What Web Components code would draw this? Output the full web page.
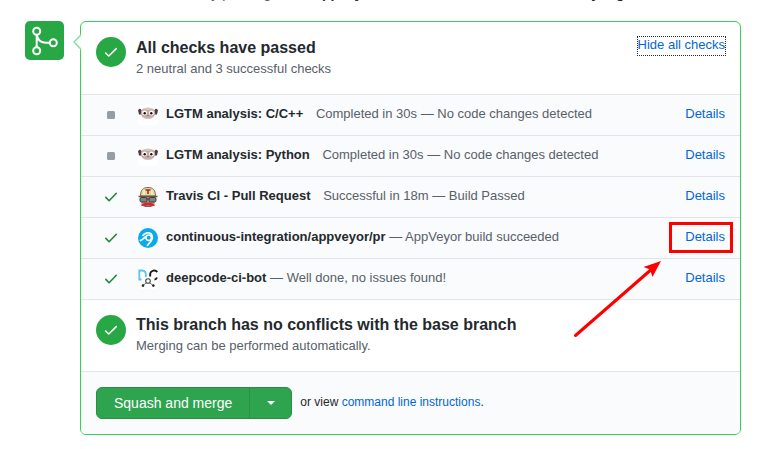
<!DOCTYPE html>
<html lang="en">
<head>
<meta charset="utf-8">
<title>Merge checks</title>
<style>
html{overflow:hidden}
body{margin:0;background:#fff;font-family:"Liberation Sans",Arial,sans-serif;font-size:13px;line-height:20px;color:#24292e}
</style>
</head>
<body>
<merge-page></merge-page>

<template id="page">
<style>
:host{display:block;padding:0 17px 14px 25px}
.hint{margin:-17px 0 17px 58px;font-size:14px;line-height:21px;color:#586069;white-space:nowrap}
.hint strong{color:#24292e}
main{display:grid;grid-template-columns:39px 1fr;column-gap:16px;align-items:start}
</style>
<p class="hint">Add more commits by pushing to the <strong>appveyor-artifacts</strong> branch on <strong>radar/memory-log</strong>.</p>
<main>
<merge-badge></merge-badge>
<merge-panel>
<status-header heading="All checks have passed" note="2 neutral and 3 successful checks"><toggle-link>Hide all checks</toggle-link></status-header>
<check-row state="neutral" logo="lgtm" name="LGTM analysis: C/C++" spaced>Completed in 30s — No code changes detected</check-row>
<check-row state="neutral" logo="lgtm" name="LGTM analysis: Python" spaced>Completed in 30s — No code changes detected</check-row>
<check-row state="success" logo="travis" name="Travis CI - Pull Request" spaced>Successful in 18m — Build Passed</check-row>
<check-row state="success" logo="appveyor" name="continuous-integration/appveyor/pr" marked>— AppVeyor build succeeded</check-row>
<check-row state="success" logo="deepcode" name="deepcode-ci-bot">— Well done, no issues found!</check-row>
<status-header class="rule" heading="This branch has no conflicts with the base branch" note="Merging can be performed automatically."></status-header>
<merge-actions></merge-actions>
</merge-panel>
</main>
</template>

<template id="badge">
<style>
:host{display:grid;place-items:center;height:39px;border-radius:5px;background:#28a745}
svg{display:block}
</style>
<svg width="39" height="39" viewBox="0 0 39 39" fill="none" stroke="#fff" stroke-width="2"><circle cx="11.7" cy="10.3" r="3.5"/><circle cx="11.7" cy="29.7" r="3.5"/><circle cx="28.3" cy="21.7" r="3.5"/><path d="M11.7 14v12M12 15c1.2 4.500 5 6.700 9 6.700h4"/></svg>
</template>

<template id="panel">
<style>
:host{display:block;position:relative;border:1px solid #34d058;border-radius:6px;min-width:0;background:#fff}
.tail{position:absolute;left:-8px;top:12px;display:block}
</style>
<svg class="tail" width="8" height="16" viewBox="0 0 8 16"><path d="M8 0L1 8l7 8z" fill="#fafbfc"/><path d="M8 .7L1 8l7 7.300" fill="none" stroke="#86dc98" stroke-width="1.300"/></svg>
<slot></slot>
</template>

<template id="header">
<style>
:host{display:flex;align-items:flex-start;padding:14px 14px 15px 15px}
:host(.rule){border-top:1px solid #e1e4e8;padding-top:13px}
.round{flex:none;width:30px;height:30px;margin:1px 10px 0 0;border-radius:50%;background:#28a745;display:grid;place-items:center}
:host(.rule) .round{margin-top:2px}
.text{flex:1;min-width:0}
h3{margin:0;font-size:16px;line-height:23px}
p{margin:0;color:#586069;line-height:20px}
</style>
<span class="round"><svg width="16" height="16" viewBox="0 0 16 16" fill="none" stroke="#fff" stroke-width="1.500" stroke-linecap="round" stroke-linejoin="round"><path d="M2.600 9l3.200 3L13.300 4.600"/></svg></span>
<div class="text"><h3></h3><p></p></div>
<slot></slot>
</template>

<template id="toggle">
<style>
:host{display:block}
button{display:block;margin:0;padding:0 0 2px 0;border:1px dotted #24292e;background:none;color:#0366d6;font:inherit;line-height:16px;cursor:pointer}
</style>
<button type="button" aria-expanded="true"><slot></slot></button>
</template>

<template id="row">
<style>
:host{display:grid;grid-template-columns:30px 40px 1fr auto;align-items:center;height:40px;padding:0 15px;background:#fafbfc;border-top:1px solid #e1e4e8}
.state{display:grid;place-items:center}
.logo{margin-left:12px;width:20px;height:20px}
svg{display:block}
p{margin:0;padding-bottom:3px;color:#586069;white-space:nowrap}
strong{color:#24292e}
:host([spaced]) strong{margin-right:9px}
a{position:relative;color:#0366d6;text-decoration:none;padding-bottom:3px}
.mark{position:absolute;left:-17px;top:-6px;pointer-events:none}
.arrow{position:absolute;right:62px;top:33px;pointer-events:none;z-index:2}
</style>
<span class="state"></span><span class="logo"></span>
<p><strong></strong> <slot></slot></p>
<a href="#details">Details</a>
</template>

<template id="actions">
<style>
:host{display:flex;align-items:center;padding:15px;background:#fafbfc;border-top:1px solid #e1e4e8;border-radius:0 0 5px 5px}
.group{display:flex;height:32px;box-sizing:border-box;border:1px solid #2a8f45;border-radius:6px;background:#2ea44f;overflow:hidden}
button{border:0;margin:0;padding:0 17px;background:none;color:#fff;font:inherit;font-size:14px;line-height:29px;cursor:pointer}
.more{border-left:1px solid #2a8f45;width:42px;padding:0;display:grid;place-items:center}
p{margin:0 0 2px 8px;font-size:12px}
a{color:#0366d6;text-decoration:none}
</style>
<div class="group"><button type="button">Squash and merge</button><button class="more" type="button" aria-label="Select merge method"><svg width="8" height="4" viewBox="0 0 8 4"><path d="M0 0h8L4 4z" fill="#fff"/></svg></button></div>
<p>or view <a href="#cli">command line instructions</a>.</p>
</template>

<script>
const ICONS = {
  neutral: '<svg width="8" height="8"><rect width="8" height="8" rx="1.5" fill="#959da5"/></svg>',
  success: '<svg width="16" height="16" viewBox="0 0 16 16" fill="none" stroke="#22863a" stroke-width="1.6" stroke-linecap="round" stroke-linejoin="round"><path d="M2.800 8.400l3.300 3.300L13.300 4.300"/></svg>',
  lgtm: '<svg width="20" height="20" viewBox="0 0 20 20"><rect width="20" height="20" rx="3" fill="#fff"/><path d="M0 5l2-1.500 2 2-1 4-2 0z" fill="#4b3b40"/><path d="M20 5l-2-1.500-2 2 1 4 2 0z" fill="#4b3b40"/><path d="M3 7C3 4 6 3 10 3s7 1 7 4c1 4-3 7-7 7s-8-3-7-7z" fill="#c5aaa8"/><path d="M5 4c3-2 7-2 10 0l-5 1z" fill="#dcc9c4"/><path d="M6 12c2 1.500 6 1.500 8 0l-1 2H7z" fill="#d8c6c2"/><circle cx="6.500" cy="8" r="2.400" fill="#fff"/><circle cx="13.500" cy="8" r="2.400" fill="#fff"/><circle cx="6.700" cy="8.300" r="1.200" fill="#171315"/><circle cx="13.300" cy="8.300" r="1.200" fill="#171315"/><path d="M9 10h2l-1 1z" fill="#70484c"/></svg>',
  travis: '<svg width="20" height="20" viewBox="0 0 20 20"><path d="M2.500 10h15l-1 7-3 3h-7l-3-3z" fill="#b5957f"/><path d="M2.500 9C2.500 3 5 .5 10 .5S17.500 3 17.500 9z" fill="#e7d79c" stroke="#77704c"/><path d="M6 3v5M14 3v5" stroke="#f7efc9" stroke-width="1.500"/><path d="M7.500 3h5M10 3v4" stroke="#a62a35" stroke-width="1.600"/><path d="M.5 9.500h19" stroke="#5d5848" stroke-width="1.500"/><rect x="2" y="10.500" width="7" height="4.500" rx="1.500" fill="#7d8584" stroke="#443b38"/><rect x="11" y="10.500" width="7" height="4.500" rx="1.500" fill="#7d8584" stroke="#443b38"/><path d="M8.500 12h3" stroke="#443b38"/><path d="M2.500 18c2-.3 3-2.500 7.500-2.500s5.500 2.200 7.500 2.500c-1.500 1.500-5 1.500-7.500 0-2.500 1.500-6 1.500-7.500 0z" fill="#d72535"/><path d="M7 19.300h6" stroke="#665750"/></svg>',
  appveyor: '<svg width="20" height="20" viewBox="0 0 20 20"><circle cx="10" cy="10" r="10" fill="#0ba9ee"/><g fill="none" stroke="#fff"><circle cx="10.700" cy="9.800" r="2.700" stroke-width="1.500"/><path d="M1.800 12.800C4.500 12 6 10 8 8.500" stroke-width="1.700"/><path d="M4.500 8C7 4.500 11 4 13 5.800c2.200 2.200 1.500 5.500-.3 7.700L9 18" stroke-width="1.700"/></g></svg>',
  deepcode: '<svg width="20" height="20" viewBox="0 0 20 20" fill="none"><rect width="20" height="20" rx="3" fill="#fff"/><path d="M3.500 10.500H1.300V1.500H4C7.500 1.500 8.300 4.500 7.800 8" stroke="#56c5eb" stroke-width="1.800"/><path d="M19.300 3C17 .5 13 1.500 12.200 4.500v3M19 8.500c-.6 1.500-1.300 2-2.500 2" stroke="#161819" stroke-width="1.900"/><circle cx="10" cy="12" r="2.300" stroke="#444b50" stroke-width="1.100"/><path d="M8.300 13.800L5.500 16M11.700 13.800l2.800 2.200" stroke="#6b7175"/><circle cx="5" cy="16.600" r="1.300" fill="#202325"/><circle cx="15.300" cy="16.600" r="1.300" fill="#202325"/></svg>'
};
const MARK = '<svg class="mark" width="66" height="34" aria-hidden="true"><rect x="2.500" y="2.500" width="61" height="28" fill="none" stroke="#f00" stroke-width="3"/></svg>';
const ARROW = '<svg class="arrow" width="90" height="80" aria-hidden="true"><path d="M2.500 75.500L80 8" stroke="#f00" stroke-width="3" stroke-linecap="round"/><path d="M88 1L70.500 7l6.500 2.500 2.500 7.500z" fill="#f00"/></svg>';

class Part extends HTMLElement {
  constructor() {
    super();
    this.attachShadow({mode: 'open'}).append(document.getElementById(this.constructor.view).content.cloneNode(true));
  }
  $(selector) { return this.shadowRoot.querySelector(selector); }
}
const define = (tag, view) => customElements.define(tag, class extends Part { static view = view; });

customElements.define('status-header', class extends Part {
  static view = 'header';
  connectedCallback() {
    this.$('h3').textContent = this.getAttribute('heading');
    this.$('p').textContent = this.getAttribute('note');
  }
});
customElements.define('check-row', class extends Part {
  static view = 'row';
  connectedCallback() {
    this.$('.state').innerHTML = ICONS[this.getAttribute('state')];
    this.$('.logo').innerHTML = ICONS[this.getAttribute('logo')];
    this.$('strong').textContent = this.getAttribute('name');
    if (this.hasAttribute('marked')) this.$('a').insertAdjacentHTML('beforeend', MARK + ARROW);
  }
});
define('merge-badge', 'badge');
define('toggle-link', 'toggle');
define('merge-actions', 'actions');
define('merge-panel', 'panel');
define('merge-page', 'page');
</script>
</body>
</html>
